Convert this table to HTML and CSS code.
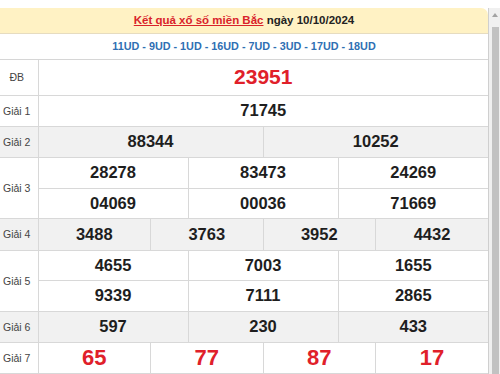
FILE: index.html
```html
<!DOCTYPE html>
<html lang="vi">
<head>
<meta charset="utf-8">
<link rel="stylesheet" href="styles.css">
</head>
<body>
<div class="page">
  <div class="box">
    <div class="title"><a href="#">Kết quả xổ số miền Bắc</a> ngày 10/10/2024</div>
    <div class="codes">11UD - 9UD - 1UD - 16UD - 7UD - 3UD - 17UD - 18UD</div>
    <table class="kq">
      <colgroup>
        <col class="c-label">
        <col><col><col><col><col><col><col><col><col><col><col><col>
      </colgroup>
      <tr class="r-db"><td class="lbl">ĐB</td><td colspan="12" class="red big">23951</td></tr>
      <tr><td class="lbl">Giải 1</td><td colspan="12">71745</td></tr>
      <tr class="gray"><td class="lbl">Giải 2</td><td colspan="6">88344</td><td colspan="6">10252</td></tr>
      <tr><td class="lbl" rowspan="2">Giải 3</td><td colspan="4">28278</td><td colspan="4">83473</td><td colspan="4">24269</td></tr>
      <tr class="short"><td colspan="4">04069</td><td colspan="4">00036</td><td colspan="4">71669</td></tr>
      <tr class="gray tall"><td class="lbl">Giải 4</td><td colspan="3">3488</td><td colspan="3">3763</td><td colspan="3">3952</td><td colspan="3">4432</td></tr>
      <tr class="short"><td class="lbl" rowspan="2">Giải 5</td><td colspan="4">4655</td><td colspan="4">7003</td><td colspan="4">1655</td></tr>
      <tr><td colspan="4">9339</td><td colspan="4">7111</td><td colspan="4">2865</td></tr>
      <tr class="gray"><td class="lbl">Giải 6</td><td colspan="4">597</td><td colspan="4">230</td><td colspan="4">433</td></tr>
      <tr><td class="lbl">Giải 7</td><td colspan="3" class="red">65</td><td colspan="3" class="red">77</td><td colspan="3" class="red">87</td><td colspan="3" class="red">17</td></tr>
    </table>
  </div>
  <div class="scrollbar">
    <div class="arrow"></div>
    <div class="thumb"></div>
  </div>
</div>
</body>
</html>
```

FILE: styles.css
```css
* { box-sizing: border-box; }
html, body { margin: 0; padding: 0; background: #fff; }
body { font-family: "Liberation Sans", Arial, sans-serif; color: #222; overflow: hidden; }

.page {
  display: flex;
  align-items: stretch;
  height: 374px;
  padding-top: 8px;
}

.box {
  width: 489px;
  flex: none;
  border-right: 1px solid #cfcfcf;
}

.title {
  height: 26px;
  background: #fff2c4;
  border-radius: 0 7px 0 0;
  border-bottom: 1px solid #e6dcc0;
  text-align: center;
  font-size: 11.5px;
  font-weight: bold;
  line-height: 25px;
  color: #222;
}
.title a { color: #d9232b; text-decoration: underline; }

.codes {
  height: 26px;
  border-bottom: 1px solid #d6d6d6;
  text-align: center;
  font-size: 10.8px;
  font-weight: bold;
  line-height: 25px;
  color: #2f6fb3;
}

.kq {
  width: 488px;
  table-layout: fixed;
  border-collapse: collapse;
}
.kq col { width: 37.5px; }
.kq col.c-label { width: 38px; }

.kq td {
  height: 31px;
  padding: 0;
  border: 1px solid #d8d8d8;
  text-align: center;
  vertical-align: middle;
  font-size: 16.5px;
  font-weight: bold;
  color: #1e1e1e;
}
.kq tr:first-child td { border-top: 0; }
.kq td:first-child { border-left: 0; }
.kq td:last-child { border-right: 0; }

.kq tr.r-db td { height: 35px; }
.kq tr.short td { height: 30px; }
.kq tr.tall td { height: 32px; }

.kq td.lbl {
  font-size: 10.5px;
  font-weight: normal;
  color: #444;
  padding-right: 4px;
}

.kq tr.gray td { background: #f1f1f1; }

.kq td.red { color: #e0202a; font-size: 22px; font-weight: bold; }
.kq td.big { font-size: 21px; font-weight: bold; }

.scrollbar {
  width: 11px;
  flex: none;
  background: #f0f0f0;
  display: flex;
  flex-direction: column;
  align-items: center;
  padding-top: 5px;
}
.arrow {
  width: 0; height: 0;
  border-left: 3px solid transparent;
  border-right: 3px solid transparent;
  border-bottom: 4px solid #a3a3a3;
}
.thumb {
  margin-top: 10px;
  width: 7px;
  flex: 1;
  background: #c2c2c2;
  margin-left: 2px;
}
```
